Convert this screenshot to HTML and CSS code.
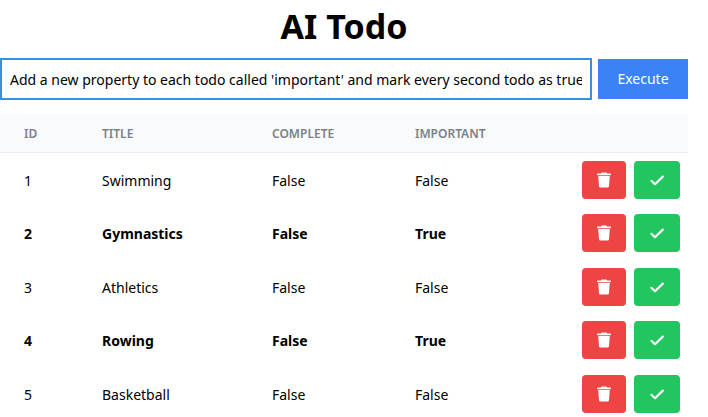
FILE: index.html
```html
<!DOCTYPE html>
<html lang="en">

<head>
    <meta charset="UTF-8">
    <meta name="viewport" content="width=device-width, initial-scale=1">
    <title>AI Todo</title>
    <link rel="stylesheet" href="styles.css">
</head>

<body>
    <svg class="sprite" aria-hidden="true">
        <symbol id="trash" viewBox="0 0 16 16">
            <path d="M1.2 1.4h3.7l.8-1h4.6l.8 1h3.7v1.8H1.2zM2.2 4h11.6l-.8 10.2q-.1 1.4-1.5 1.4h-7q-1.4 0-1.5-1.4z" />
        </symbol>
        <symbol id="check" viewBox="0 0 16 16">
            <path d="M2.4 8.8l3.6 3.4 7.8-7.6" fill="none" stroke="currentColor" stroke-width="2.2" stroke-linecap="round" stroke-linejoin="round" />
        </symbol>
    </svg>

    <h1>AI Todo</h1>
    <form class="prompt">
        <input type="text" id="prompt" aria-label="Prompt" value="Add a new property to each todo called 'important' and mark every second todo as true">
        <button type="button" class="execute">Execute</button>
    </form>

    <table>
        <thead>
            <tr>
                <th class="col-id">ID</th>
                <th class="col-title">Title</th>
                <th class="col-complete">Complete</th>
                <th>Important</th>
                <th class="col-actions"></th>
            </tr>
        </thead>
        <tbody id="todos"></tbody>
    </table>

    <script>
        const todos = [
            { id: 1, title: 'Swimming', complete: false, important: false },
            { id: 2, title: 'Gymnastics', complete: false, important: true },
            { id: 3, title: 'Athletics', complete: false, important: false },
            { id: 4, title: 'Rowing', complete: false, important: true },
            { id: 5, title: 'Basketball', complete: false, important: false }
        ];

        function label(value) {
            return value ? 'True' : 'False';
        }

        document.getElementById('todos').innerHTML = todos.map(todo => `
            <tr class="${todo.important ? 'important' : ''}">
                <td>${todo.id}</td>
                <td>${todo.title}</td>
                <td>${label(todo.complete)}</td>
                <td>${label(todo.important)}</td>
                <td class="actions">
                    <div class="buttons">
                        <button type="button" class="delete" aria-label="Delete ${todo.title}"><svg><use href="#trash" /></svg></button>
                        <button type="button" class="done" aria-label="Complete ${todo.title}"><svg><use href="#check" /></svg></button>
                    </div>
                </td>
            </tr>
        `).join('');
    </script>
</body>

</html>
```
FILE: styles.css
```css
* {
    box-sizing: border-box;
}

body {
    margin: 0;
    padding: 4px 20px 0 0;
    background: #fff;
    color: #000;
    font-family: "Segoe UI", "Noto Sans", "Open Sans", sans-serif;
    font-size: 14px;
    line-height: 22px;
}

.sprite {
    display: none;
}

h1 {
    margin: 0 0 10px;
    font-size: 34px;
    line-height: 44px;
    text-align: center;
}

button,
input {
    font: inherit;
}

button {
    border: 0;
    padding: 0;
    color: #fff;
    cursor: pointer;
}

.prompt {
    display: flex;
    align-items: center;
    gap: 6px;
    margin-bottom: 14px;
}

.prompt input {
    flex: 1;
    min-width: 0;
    height: 42px;
    padding: 0 8px;
    border: 2px solid #3b8fd9;
    outline: none;
}

.execute {
    width: 90px;
    height: 40px;
    background: #3b82f6;
}

table {
    width: 100%;
    table-layout: fixed;
    border-collapse: separate;
    border-spacing: 0;
}

th {
    height: 39px;
    padding: 2px 0 0 24px;
    border-bottom: 1px solid #e9edf1;
    background: #f8fafc;
    color: #7b8189;
    font-size: 12px;
    font-weight: 600;
    text-align: left;
    text-transform: uppercase;
}

td {
    height: 53px;
    padding: 2px 0 0 24px;
}

.important td {
    height: 54px;
    font-weight: bold;
}

.col-id {
    width: 78px;
}

.col-title {
    width: 170px;
}

.col-complete {
    width: 143px;
}

.col-actions {
    width: 130px;
}

td.actions {
    padding: 0 8px 0 0;
}

.buttons {
    display: flex;
    justify-content: flex-end;
    gap: 8px;
}

.delete,
.done {
    display: flex;
    align-items: center;
    justify-content: center;
    width: 44px;
    height: 38px;
    border-radius: 4px;
    background: #ef4444;
}

.done {
    width: 46px;
    background: #22c55e;
}

.buttons svg {
    width: 16px;
    height: 16px;
    fill: currentColor;
}
```
